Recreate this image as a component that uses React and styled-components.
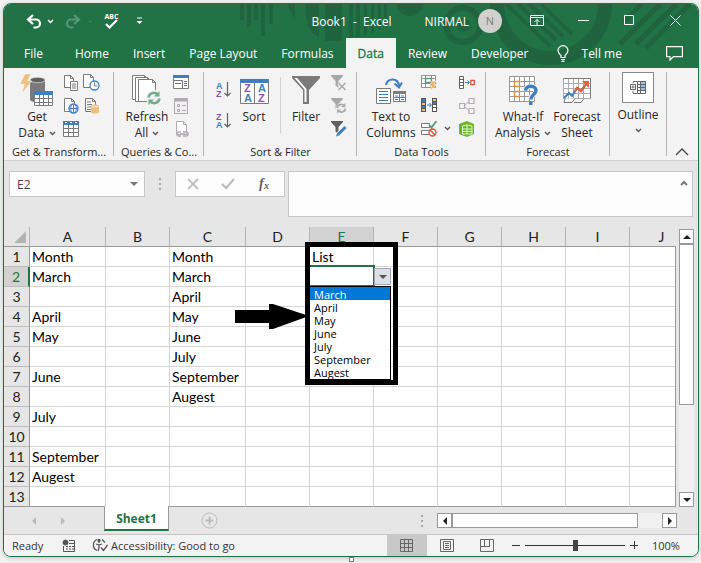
import React from "react";
import styled, { createGlobalStyle, css } from "styled-components";

const GREEN = "#217346";
const GREY = "#7a7a7a";
const BLUE = "#3f7fbf";
const UI = '"Open Sans", "Noto Sans", sans-serif';
const CELL = 'Lato, "Open Sans", sans-serif';

const GlobalStyle = createGlobalStyle`
  * { box-sizing: border-box; }
  body { margin: 0; background: #f1f1f1; font-family: ${UI}; font-size: 12px; color: #262626; }
  button, input, textarea, select { font: inherit; color: inherit; margin: 0; }
  svg { display: block; }
`;

const Page = styled.div`
  padding: 3px 2px 0 3px;
`;
const Window = styled.main`
  border: 1px solid ${GREEN};
  border-radius: 8px;
  overflow: hidden;
  background: #e6e6e6;
  box-shadow: 0 1px 4px rgba(0, 0, 0, 0.2);
`;
const PlainButton = styled.button`
  display: flex;
  align-items: center;
  justify-content: center;
  padding: 0;
  border: 0;
  background: none;
`;

/* Header */
const Header = styled.header`
  position: relative;
  background: ${GREEN};
  color: #fff;
`;
const Pattern = styled.svg`
  position: absolute;
  top: 0;
  right: 0;
`;
const TitleBar = styled.div`
  position: relative;
  display: flex;
  align-items: center;
  height: 34px;
`;
const QuickAccess = styled.div`
  display: flex;
  align-items: center;
  flex: 1;
  padding-left: 20px;
`;
const QuickButton = styled(PlainButton)`
  width: ${(p) => p.$w}px;
  height: 28px;
  opacity: ${(p) => (p.disabled ? 0.25 : 1)};
  color: #fff;
`;
const Title = styled.div`
  white-space: pre;
  padding-right: 33px;
`;
const Account = styled.button`
  display: flex;
  align-items: center;
  gap: 9px;
  padding: 0 12px 0 0;
  border: 0;
  background: none;
  color: #fff;
`;
const Avatar = styled.span`
  width: 24px;
  height: 24px;
  border-radius: 50%;
  background: #d2d0ce;
  color: #7a7a80;
  font-size: 11px;
  line-height: 24px;
  text-align: center;
`;
const WindowButton = styled(PlainButton)`
  width: 46px;
  height: 32px;
  align-self: flex-start;
  color: #fff;
`;
const Tabs = styled.nav`
  position: relative;
  display: flex;
  height: 30px;
  padding-left: 8px;
`;
const Tab = styled.button`
  height: 30px;
  padding: 0 ${(p) => (p.$wide ? 20 : 12)}px 0 12px;
  border: 0;
  background: ${(p) => (p.$active ? "#f3f3f3" : "transparent")};
  color: ${(p) => (p.$active ? GREEN : "#fff")};
  -webkit-text-stroke: ${(p) => (p.$active ? "0.3px" : "0")};
  white-space: nowrap;
`;
const TellMe = styled(PlainButton)`
  gap: 13px;
  margin-left: 16px;
  color: #fff;
  white-space: nowrap;
`;
const CommentButton = styled(PlainButton)`
  margin: 0 15px 0 auto;
  color: #fff;
`;

/* Ribbon */
const Ribbon = styled.section`
  display: flex;
  height: 93px;
  background: #f3f3f3;
  border-bottom: 1px solid #d2d2d2;
`;
const Group = styled.div`
  position: relative;
  display: flex;
  flex-direction: column;
  flex: 0 0 ${(p) => p.$w}px;
  &::after {
    content: "";
    position: absolute;
    top: 4px;
    bottom: 4px;
    right: 0;
    width: 1px;
    background: #b4b4b4;
  }
`;
const GroupBody = styled.div`
  display: flex;
  height: 76px;
  padding-left: ${(p) => p.$pad}px;
`;
const GroupLabel = styled.div`
  font-size: 11px;
  line-height: 16px;
  text-align: center;
  white-space: nowrap;
`;
const Big = styled.button`
  display: flex;
  flex-direction: column;
  align-items: center;
  width: ${(p) => p.$w}px;
  padding: 5px 0 0;
  border: 0;
  background: none;
  line-height: 16px;
  white-space: nowrap;
`;
const BigIcon = styled.span`
  display: flex;
  align-items: center;
  justify-content: center;
  height: 36px;
`;
const Line = styled.span`
  display: flex;
  align-items: center;
  gap: 4px;
`;
const Smalls = styled.div`
  display: grid;
  grid-template-columns: ${(p) => p.$cols};
  grid-template-rows: repeat(${(p) => p.$rows || 3}, ${(p) => p.$h || 23}px);
  align-content: start;
  padding-top: ${(p) => (p.$rows === 2 ? 6 : 3)}px;
`;
const InnerRule = styled.div`
  width: 1px;
  height: 56px;
  margin: 9px 3px 0 6px;
  background: #d0d0d0;
`;
const OutlineBox = styled.span`
  display: flex;
  align-items: center;
  justify-content: center;
  width: 32px;
  height: 31px;
  margin-bottom: 4px;
  border: 1px solid #8a8a8a;
  background: #fff;
`;
const OutlineButton = styled(Big)`
  padding-top: 4px;
`;
const Collapse = styled(PlainButton)`
  align-self: flex-end;
  width: 30px;
  height: 16px;
`;

/* Formula bar */
const FormulaRow = styled.section`
  display: flex;
  align-items: flex-start;
  height: 66px;
  padding: 10px 5px 0;
`;
const Field = styled.div`
  display: flex;
  align-items: center;
  justify-content: space-around;
  width: ${(p) => p.$w}px;
  height: 26px;
  border: 1px solid #c6c6c6;
  background: #fdfdfd;
`;
const NameInput = styled.input`
  flex: 1;
  min-width: 0;
  padding: 0 0 0 7px;
  border: 0;
  background: none;
  color: #444;
  outline: 0;
`;
const NameDrop = styled(PlainButton)`
  width: 20px;
  height: 24px;
`;
const Dots = styled.div`
  display: grid;
  gap: 3px;
  align-content: center;
  height: 26px;
  margin: 0 14px;
  & > i { width: 2px; height: 2px; background: #a8a8a8; }
`;
const FormulaBox = styled.div`
  display: flex;
  flex: 1;
  align-items: flex-start;
  height: 46px;
  margin-left: 3px;
  border: 1px solid #c6c6c6;
  background: #fdfdfd;
`;
const FormulaInput = styled.textarea`
  flex: 1;
  height: 44px;
  padding: 4px;
  border: 0;
  outline: 0;
  resize: none;
  background: none;
`;
const FormulaToggle = styled(PlainButton)`
  width: 16px;
  height: 22px;
`;

/* Sheet */
const SheetArea = styled.section`
  display: flex;
`;
const Grid = styled.div`
  position: relative;
  flex: 1;
  min-width: 0;
  overflow: hidden;
  &::after {
    content: "";
    position: absolute;
    top: 19px;
    right: 0;
    bottom: 0;
    width: 1px;
    background: #999;
  }
`;
const Table = styled.table`
  width: 100%;
  min-width: 690px;
  table-layout: fixed;
  border-collapse: separate;
  border-spacing: 0;
  font-family: ${CELL};
  font-size: 14px;
  color: #000;
`;
const Col = styled.col`
  width: ${(p) => (p.$w ? `${p.$w}px` : "auto")};
`;
const headCell = css`
  height: 20px;
  padding: 0;
  font-weight: 400;
  line-height: 19px;
  text-align: center;
  color: ${(p) => (p.$on ? GREEN : "#222")};
`;
const ColHead = styled.th`
  ${headCell}
  background: ${(p) => (p.$on ? "#d2d2d2" : "#e6e6e6")};
  border-bottom: 1px solid ${(p) => (p.$on ? GREEN : "#999")};
  border-right: 1px solid #b4b4b4;
`;
const RowHead = styled.th`
  ${headCell}
  background: ${(p) => (p.$on ? "#d2d2d2" : "#e6e6e6")};
  border-bottom: 1px solid ${(p) => (p.$last ? "#999" : "#bdbdbd")};
  border-right: ${(p) => (p.$on ? `2px solid ${GREEN}` : "1px solid #999")};
`;
const Corner = styled.td`
  padding: 0 3px 3px 0;
  vertical-align: bottom;
  border-right: 1px solid #b4b4b4;
  border-bottom: 1px solid #999;
  & > svg { margin-left: auto; }
`;
const Cell = styled.td`
  height: 20px;
  padding: 0 0 0 2px;
  line-height: 19px;
  background: #fff;
  border-right: 1px solid #d4d4d4;
  border-bottom: 1px solid ${(p) => (p.$last ? "#999" : "#d4d4d4")};
  white-space: nowrap;
`;
const Selection = styled.div`
  position: absolute;
  top: 38px;
  left: 304px;
  width: 67px;
  height: 22px;
  border: 2px solid ${GREEN};
`;
const DropButton = styled(PlainButton)`
  position: absolute;
  top: 41px;
  left: 370px;
  width: 17px;
  height: 17px;
  border: 1px solid #a4a8b2;
  background: #dcdfe6;
`;
const DropList = styled.select`
  position: absolute;
  top: 59px;
  left: 305px;
  width: 82px;
  height: 94px;
  padding: 0;
  border: 1px solid #000;
  border-radius: 0;
  outline: 0;
  overflow: hidden;
  background: #fff;
  font-size: 11px;
  scrollbar-width: none;
  & option {
    height: 13px;
    min-height: 13px;
    padding: 0 0 0 4px;
    line-height: 12px;
    color: #000;
  }
  & option:checked {
    background: linear-gradient(#0078d7, #0078d7);
    -webkit-text-fill-color: #fff;
  }
`;
const Frame = styled.div`
  position: absolute;
  top: 15px;
  left: 301px;
  width: 93px;
  height: 143px;
  border: 5px solid #000;
`;
const Arrow = styled.svg`
  position: absolute;
  top: 77px;
  left: 231px;
`;
const VScroll = styled.div`
  display: flex;
  flex-direction: column;
  width: 15px;
  margin: 2px 4px 0 3px;
  background: #f1f1f1;
`;
const ScrollButton = styled(PlainButton)`
  flex: none;
  width: 15px;
  height: 15px;
  border: 1px solid #999;
  background: #fff;
`;
const VThumb = styled.div`
  height: 161px;
  margin-bottom: auto;
  border: 1px solid #999;
  background: #fff;
`;
const HScroll = styled.div`
  display: flex;
  flex: 0 0 240px;
  height: 15px;
  margin-right: 21px;
  background: #f1f1f1;
`;
const HThumb = styled.div`
  width: 186px;
  margin-right: auto;
  border: 1px solid #999;
  background: #fff;
`;
const SheetBar = styled.section`
  display: flex;
  align-items: center;
  height: 28px;
  border-bottom: 1px solid #c6c6c6;
`;
const SheetNav = styled.div`
  display: flex;
  gap: 14px;
  width: 100px;
  padding-left: 22px;
`;
const SheetArrow = styled(PlainButton)`
  width: 15px;
  height: 15px;
`;
const SheetTab = styled.button`
  align-self: flex-start;
  position: relative;
  width: 65px;
  height: 25px;
  margin-top: -1px;
  padding: 2px 0 0;
  border: 1px solid #999;
  border-top: 0;
  border-bottom: 2px solid ${GREEN};
  background: #fff;
  color: ${GREEN};
  font-weight: 700;
`;
const AddSheet = styled(PlainButton)`
  margin: 0 auto 0 32px;
`;

/* Status bar */
const StatusBar = styled.footer`
  display: flex;
  align-items: center;
  height: 21px;
  background: #f3f3f3;
  color: #333;
  font-size: 11px;
  white-space: nowrap;
`;
const Ready = styled.span`
  width: 58px;
  padding-left: 8px;
`;
const Access = styled(PlainButton)`
  gap: 3px;
  margin: 0 auto 0 17px;
`;
const ViewButton = styled(PlainButton)`
  width: 40px;
  height: 21px;
  background: ${(p) => (p.$on ? "#c8c8c8" : "none")};
`;
const ZoomButton = styled(PlainButton)`
  width: 18px;
  height: 20px;
`;
const Slider = styled.input`
  appearance: none;
  width: 100px;
  height: 16px;
  background: linear-gradient(#333, #333) center / 100% 1px no-repeat;
  &::-webkit-slider-thumb {
    appearance: none;
    width: 5px;
    height: 11px;
    border-radius: 0;
    background: #444;
  }
`;
const ZoomLevel = styled.span`
  width: 55px;
  padding-left: 9px;
`;
const BelowWindow = styled.div`
  display: flex;
  justify-content: center;
  height: 6px;
`;
const Handle = styled.i`
  width: 5px;
  height: 5px;
  border: 1px solid #777;
  background: #fff;
`;

const Svg = ({ w, h, children, ...rest }) => (
  <svg width={w} height={h} viewBox={`0 0 ${w} ${h}`} fill="none" aria-hidden="true" {...rest}>
    {children}
  </svg>
);
const Chevron = ({ c = "#555" }) => (
  <Svg w={7} h={5} stroke={c} strokeWidth="1.4"><path d="M1 1l2.500 2.500L6 1" /></Svg>
);
const Triangle = ({ dir, c = "#222" }) => {
  const d = { up: "M0 6h8L4 2z", down: "M0 2h8L4 6z", left: "M6 0v8L2 4z", right: "M2 0v8l4-4z" }[dir];
  return <Svg w={8} h={8}><path d={d} fill={c} /></Svg>;
};
const Sheet = ({ x = 0, y = 0, w = 10, h = 13, c = GREY }) => (
  <path d={`M${x + 0.5} ${y + 0.5}h${w - 4}l3 3v${h - 4}h${1 - w}zM${x + w - 3.5} ${y + 0.5}v3h3`} fill="#fff" stroke={c} />
);
const Refresh = ({ x, y, s = 1, c }) => (
  <g transform={`translate(${x} ${y}) scale(${s})`} stroke={c} strokeWidth="2.4">
    <path d="M1.500 6.500A5.300 5.300 0 0 1 11 4M12.500 7.500A5.300 5.300 0 0 1 3 10" />
    <path d="M12.500 0v5.500H7zM1.500 14V8.500H7z" fill={c} stroke="none" />
  </g>
);
const Funnel = ({ c }) => <path d="M0 0h12v1L7.500 6v7L4.500 10.500V6L0 1z" fill={c} />;

const icons = {
  undo: (
    <Svg w={17} h={15} stroke="#fff" strokeWidth="2.2">
      <path d="M7 1L2 5.500L7 10M2.500 5.500H10a4 4 0 0 1 0 8H7.500" />
    </Svg>
  ),
  redo: (
    <Svg w={17} h={15} stroke="#fff" strokeWidth="2.2">
      <path d="M10 1l5 4.500L10 10M14.500 5.500H7a4 4 0 0 0 0 8h2.500" />
    </Svg>
  ),
  spell: (
    <Svg w={15} h={20}>
      <text x="7.500" y="8" textAnchor="middle" fontSize="7" fontWeight="700" fontFamily="Open Sans" fill="#fff">ABC</text>
      <path d="M2 13l3.500 3.500L13 9" stroke="#fff" strokeWidth="2.2" />
    </Svg>
  ),
  more: <Svg w={7} h={8}><path d="M1 1h5" stroke="#fff" /><path d="M.5 4h6l-3 3z" fill="#fff" /></Svg>,
  ribbon: (
    <Svg w={14} h={11} stroke="#fff"><path d="M.5.500h13v10H.500zM.500 2.500h13M7 10V4.500M4.500 7L7 4.500L9.500 7" /></Svg>
  ),
  bulb: (
    <Svg w={12} h={17} stroke="#fff" strokeWidth="1.2">
      <path d="M4 12.500V10.500C2.500 9 1 8 1 5.600a5 5 0 0 1 10 0C11 8 9.500 9 8 10.500v2zM4 14.500h4M4.500 16.400h3" />
    </Svg>
  ),
  comment: (
    <Svg w={17} h={15} stroke="#fff" strokeWidth="1.2"><path d="M.6.600h15.800v10H7.500L4 14V10.600H.600z" /></Svg>
  ),
  getData: (
    <Svg w={34} h={34}>
      <path d="M10 6v20c2 3 13 3 15 0V6z" fill={GREY} />
      <ellipse cx="17.5" cy="6" rx="7.5" ry="2.7" fill="#606060" stroke="#f3f3f3" strokeWidth=".6" />
      <path d="M5 0h6L7.500 7H12L2 19l2.500-9H0z" fill="#edc181" stroke="#f3f3f3" strokeWidth=".5" />
      <path d="M14.500 17.500h18v14h-18z" fill="#fff" stroke={GREY} />
      <path d="M14 17h19v4H14z" fill={BLUE} />
      <path d="M14 24.500h19M14 28.500h19M19.500 21v11M23.500 21v11M28.500 21v11" stroke={GREY} />
    </Svg>
  ),
  csv: (
    <Svg w={16} h={16}>
      <Sheet x={1} y={0} w={10} h={13} />
      <path d="M7.500 6.500h7v9h-7z" fill="#fff" stroke={GREY} />
      <path d="M9 9h4M9 11h4M9 13h4" stroke={GREY} />
    </Svg>
  ),
  recent: (
    <Svg w={17} h={17}>
      <Sheet x={0} y={0} w={11} h={14} />
      <circle cx="11.5" cy="11.5" r="4.5" fill="#fff" stroke={BLUE} strokeWidth="1.3" />
      <path d="M11.500 8.500v3.500h3" stroke={GREY} />
    </Svg>
  ),
  web: (
    <Svg w={16} h={16}>
      <Sheet x={1} y={0} w={11} h={14} />
      <circle cx="10.5" cy="10.5" r="4.5" fill="#fff" stroke={BLUE} strokeWidth="1.3" />
      <path d="M6 10.500h9M10.500 6v9M8.500 6.500c-1 3-1 5 0 8M12.500 6.500c1 3 1 5 0 8" stroke={BLUE} />
    </Svg>
  ),
  source: (
    <Svg w={16} h={16}>
      <Sheet x={1} y={0} w={11} h={14} />
      <path d="M3 4h4M3 6.500h5M3 9h4M3 11.500h4" stroke={GREY} />
      <path d="M7 7.500v7c1 1.500 7 1.500 8 0v-7c-1-1.500-7-1.500-8 0z" fill="#edc181" />
      <path d="M7.500 8c1 1 6 1 7 0" stroke="#fff" strokeWidth=".7" />
    </Svg>
  ),
  table: (
    <Svg w={16} h={16}>
      <path d="M.5.500h15v15H.500z" fill="#fff" stroke={GREY} />
      <path d="M0 0h16v4H0z" fill={BLUE} />
      <path d="M0 7.500h16M0 11.500h16M5.500 4v12M10.500 4v12" stroke={GREY} />
      <path d="M2 1.500h2M7 1.500h2M12 1.500h2" stroke="#fff" />
    </Svg>
  ),
  refreshAll: (
    <Svg w={30} h={34}>
      <Sheet x={0} y={1} w={16} h={25} /><Sheet x={3} y={3} w={16} h={25} /><Sheet x={6} y={5} w={18} h={23} />
      <circle cx="22" cy="24" r="8" fill="#f3f3f3" />
      <Refresh x={15} y={17} c="#72aa8c" />
    </Svg>
  ),
  queries: (
    <Svg w={16} h={15}>
      <path d="M.5.500h15v13H.500z" fill="#fff" stroke={GREY} /><path d="M0 0h16v3H0z" fill={BLUE} />
      <path d="M0 5.500h10M9.500 5v9" stroke={GREY} /><path d="M2 8.500h6M11 6.500h3M11 8.500h3M11 10.500h3" stroke={BLUE} />
    </Svg>
  ),
  props: (
    <Svg w={15} h={16} stroke="#b0abb0">
      <path d="M.5.500h13v15H.500z" fill="#f3f0f3" /><path d="M0 2h14" strokeWidth="3" />
      <path d="M3.500 6.500h2v2h-2zM3.500 11.500h2v2h-2zM8 7.500h4M8 12.500h4" />
    </Svg>
  ),
  links: (
    <Svg w={15} h={16} stroke="#b0abb0">
      <Sheet x={2} y={0} w={11} h={14} c="#b0abb0" />
      <path d="M7 11H5a2 2 0 0 0 0 4h2M9 11h3a2 2 0 0 1 0 4H9M6 13h5" fill="none" strokeWidth="1.5" />
    </Svg>
  ),
  filter: (
    <Svg w={28} h={30}>
      <path d="M0 0h28v2L17 14v14h-6V14L0 2z" fill={GREY} />
      <path d="M2.500 2L12.500 13.500V26h2V13L5 2" fill="#fff" />
    </Svg>
  ),
  clear: (
    <Svg w={16} h={16}><Funnel c="#a8a8a8" /><path d="M7.500 8l7 7M14.500 8l-7 7" stroke="#f3f3f3" strokeWidth="3.5" /><path d="M7.500 8l7 7M14.500 8l-7 7" stroke="#aaa" strokeWidth="1.5" /></Svg>
  ),
  reapply: (
    <Svg w={16} h={16}><Funnel c="#a8a8a8" /><circle cx="10.5" cy="10.5" r="5.5" fill="#f3f3f3" /><Refresh x={5} y={5} s={0.75} c="#aaa" /></Svg>
  ),
  advanced: (
    <Svg w={16} h={16}><Funnel c="#606060" /><path d="M5.500 15.500L15 5.500" stroke="#f3f3f3" strokeWidth="5" /><path d="M7 13.500L14.500 6" stroke={BLUE} strokeWidth="3" /><path d="M5 15.500l1-3 2 2z" fill={BLUE} /></Svg>
  ),
  textCols: (
    <Svg w={30} h={26}>
      <path d="M10 7c1-7 12-8 13 1" stroke={BLUE} strokeWidth="2.2" /><path d="M18.500 5.500L23 9.500L26 4.500" stroke={BLUE} strokeWidth="2" />
      <path d="M.5 10.500h14v15H.500z" fill="#fff" stroke={GREY} /><path d="M3 13.500h9M3 16.500h9M3 19.500h9M3 22.500h9" stroke={BLUE} />
      <path d="M17.500 13.500h12v10h-12z" fill="#fff" stroke={GREY} /><path d="M17 14.500h13" stroke={GREY} strokeWidth="3" />
      <path d="M17 19.500h13M23.500 16v8" stroke={GREY} /><path d="M19 18h3M25 18h3M19 21.500h3M25 21.500h3" stroke={BLUE} />
    </Svg>
  ),
  flash: (
    <Svg w={16} h={16}>
      <path d="M.5.500h14v12H.500zM0 3.500h15M0 8.500h15M4.500 0v12M10.500 0v12" fill="#fff" stroke="#909090" />
      <path d="M4.500 3.500h6v4h-6z" fill="#fff" stroke="#549d78" strokeWidth="1.4" />
      <path d="M11 6h4l-2 3.500h3L9 16l1.500-4.500H8z" fill="#edb86d" stroke="#fff" strokeWidth=".5" />
    </Svg>
  ),
  dupes: (
    <Svg w={16} h={15}>
      <path d="M0 0h5v14H0zM11 0h5v14h-5z" fill="#555" /><path d="M1 1h3v3H1zM1 8h3v2H1zM12 4h3v2h-3z" fill={BLUE} />
      <path d="M1 5h3v2H1zM1 11h3v2H1zM12 1h3v2h-3z" fill="#edc181" /><path d="M12 7h3v2h-3zM12 10h3v3h-3z" fill="#fff" />
      <path d="M6 7h4M8.500 5l2 2-2 2" stroke={BLUE} />
    </Svg>
  ),
  validate: (
    <Svg w={16} h={16}>
      <path d="M.5 2.500h8v4h-8zM.500 9.500h8v4h-8z" fill="#fff" stroke={GREY} /><path d="M8 3.500l2.500 3L15.500 0" stroke="#549d78" strokeWidth="1.8" />
      <circle cx="11.5" cy="11.5" r="3.5" fill="#fff" stroke="#d8573b" strokeWidth="1.4" /><path d="M9 9l5 5" stroke="#d8573b" strokeWidth="1.4" />
    </Svg>
  ),
  consolidate: (
    <Svg w={16} h={13}>
      <path d="M.5.500h4v12h-4zM0 3.500h5M0 6.500h5M0 9.500h5" fill="#fff" stroke="#606060" /><path d="M6 6.500h4M8.500 4.500l2 2-2 2" stroke={BLUE} />
      <path d="M11.800 4.500h3.500v4h-3.500z" fill="#fff" stroke="#d8573b" strokeWidth="1.3" />
    </Svg>
  ),
  relations: (
    <Svg w={16} h={16} stroke="#b0abb0">
      <path d="M5 8l5-4.500M5 8l5 4.500" /><path d="M.5 5.500h5v5h-5zM10 .500h5v5h-5zM10 10.500h5v5h-5z" fill="#f7f3f7" strokeWidth="1.2" />
    </Svg>
  ),
  model: (
    <Svg w={16} h={16}>
      <path d="M0 3l8-3 7 3v10l-7 3-8-3z" fill="#6cb52d" /><path d="M3.500 5l4.500-1 5 1v8H3.500zM3.500 8H13M3.500 10.500H13M8 4v9" stroke="#fff" strokeWidth=".8" />
    </Svg>
  ),
  whatIf: (
    <Svg w={29} h={30}>
      <path d="M.5.500h25v25H.500zM0 5.500h26M0 10.500h26M0 15.500h26M0 20.500h26M5.500 0v26M10.500 0v26M15.500 0v26M20.500 0v26" fill="#fff" stroke="#999" />
      <path d="M5.500 5.500h5v5h-5zM5.500 15.500h5v5h-5z" fill="#fff" stroke="#e58a3c" strokeWidth="1.3" />
      <path d="M16.500 14.500C17 8.500 27 9 27 14.500C27 18.500 21.800 18.500 21.800 23.500" stroke="#f3f3f3" strokeWidth="5" />
      <path d="M16.500 14.500C17 8.500 27 9 27 14.500C27 18.500 21.800 18.500 21.800 23.500" stroke={BLUE} strokeWidth="3.4" />
      <path d="M20 25.500h3.500V29H20z" fill={BLUE} />
    </Svg>
  ),
  forecast: (
    <Svg w={28} h={26}>
      <path d="M.5.500h27v20H.500zM0 5.500h28M0 10.500h28M0 15.500h28M5.500 0v20M10.500 0v20M15.500 0v20M20.500 0v20" fill="#fff" stroke="#aaa" />
      <path d="M.500.500h27v20" stroke={GREY} />
      <path d="M2 20.500l-1 4h8l3-4M11 24.500h7l3-4" fill="#fff" stroke={GREY} />
      <path d="M1 20l5-5 3 3 4-6" stroke={BLUE} strokeWidth="2" /><path d="M12 13l2-3 4 3 6-8" stroke="#d8653f" strokeWidth="2.4" />
      <path d="M19 3h7v7z" fill="#d8653f" />
    </Svg>
  ),
  outline: (
    <Svg w={16} h={13}>
      <path d="M.5 3.500h5v5h-5zM1.500 6h3M3 4.500v3M3 1v1M3 10v2M3 .500h4M3 12.500h4" stroke="#666" />
      <path d="M7.500.500h8v12h-8zM7.500 3.500h8M7.500 6.500h8M7.500 9.500h8M10.500 0v13" stroke="#666" /><path d="M11 2h4M11 5h4M11 8h4" stroke={BLUE} />
    </Svg>
  ),
};

const SortAZ = ({ flip }) => (
  <Svg w={16} h={24}>
    <g fontFamily="Liberation Sans" fontSize="9" fontWeight="700">
      <text x="1" y="11" fill={flip ? "#8a55a8" : BLUE}>{flip ? "Z" : "A"}</text>
      <text x="1" y="19" fill={flip ? BLUE : "#8a55a8"}>{flip ? "A" : "Z"}</text>
    </g>
    <path d="M12.500 4v14M9.500 15l3 3 3-3" stroke="#606060" strokeWidth="1.2" />
  </Svg>
);
const SortIcon = () => (
  <Svg w={29} h={25}>
    <path d="M.5.500h28v24H.500zM14.500 0v25" fill="#fff" stroke={GREY} /><path d="M0 0h29v4H0z" fill={BLUE} />
    <g fontFamily="Liberation Sans" fontSize="11" fontWeight="700">
      <text x="4" y="13" fill="#8a55a8">Z</text><text x="4" y="23" fill={BLUE}>A</text>
      <text x="18" y="13" fill={BLUE}>A</text><text x="18" y="23" fill="#8a55a8">Z</text>
    </g>
  </Svg>
);

const Small = ({ name, label }) => <PlainButton aria-label={label}>{icons[name]}</PlainButton>;
const BigButton = ({ w, icon, lines, menu }) => (
  <Big $w={w}>
    <BigIcon>{icon}</BigIcon>
    {lines.map((line, i) => (
      <Line key={line}>{line}{menu && i === lines.length - 1 && <Chevron />}</Line>
    ))}
  </Big>
);

const HeaderPattern = () => (
  <Pattern width="460" height="64" viewBox="0 0 460 64" aria-hidden="true">
    <g fill="#1f643e">
      <path d="M2 0h4v16H2zM9 0h4v23H9zM16 0h4v16h-4zM23 0h4v32h-4zM31 0h4v20h-4zM49 0h8v15zM67 0h14v33c-8-2-13-12-14-33zM87 0h17v37H87z" />
      <path d="M111 0h4v34h-4zM118 0h4v33h-4zM126 0h3v31h-3zM133 0h3v29h-3zM140 0h3v25h-3zM146 0h3v19h-3z" />
      <circle cx="172" cy="-2" r="14" /><circle cx="225" cy="21" r="7" />
    </g>
    <g fill="none" stroke="#1f643e">
      <circle cx="225" cy="21" r="17" strokeWidth="6" />
      <circle cx="313" cy="0" r="54" strokeWidth="14" />
      <path d="M268 0l44 42M280 0l38 36M291 0l34 32M303 0l31 30" strokeWidth="4" />
      <path d="M404 0l-18 18M422 0l-40 40M438 0l-40 40M452 0l-44 44" strokeWidth="5" />
    </g>
  </Pattern>
);

const columns = [["A", 76], ["B", 64], ["C", 76], ["D", 64], ["E", 64], ["F", 64], ["G", 64], ["H", 64], ["I", 64], ["J", 0]];
const data = {
  A: ["Month", "March", "", "April", "May", "", "June", "", "July", "", "September", "Augest", ""],
  C: ["Month", "March", "April", "May", "June", "July", "September", "Augest"],
  E: ["List"],
};
const options = ["March", "April", "May", "June", "July", "September", "Augest"];

export default function App() {
  return (
    <Page>
      <GlobalStyle />
      <Window>
        <Header>
          <HeaderPattern />
          <TitleBar>
            <QuickAccess>
              <QuickButton $w={20} aria-label="Undo">{icons.undo}</QuickButton>
              <QuickButton $w={12} aria-label="Undo history"><Chevron c="#fff" /></QuickButton>
              <QuickButton $w={32} disabled aria-label="Redo">{icons.redo}</QuickButton>
              <QuickButton $w={4} disabled aria-label="Redo history"><Chevron c="#fff" /></QuickButton>
              <QuickButton $w={38} aria-label="Spelling">{icons.spell}</QuickButton>
              <QuickButton $w={18} aria-label="Customize toolbar">{icons.more}</QuickButton>
            </QuickAccess>
            <Title>{"Book1  -  Excel"}</Title>
            <Account>NIRMAL<Avatar>N</Avatar></Account>
            <WindowButton aria-label="Ribbon display options">{icons.ribbon}</WindowButton>
            <WindowButton aria-label="Minimize"><Svg w={11} h={11} stroke="#fff"><path d="M0 5.500h11" /></Svg></WindowButton>
            <WindowButton aria-label="Maximize"><Svg w={11} h={11} stroke="#fff"><path d="M.5.500h9v9h-9z" /></Svg></WindowButton>
            <WindowButton aria-label="Close"><Svg w={11} h={11} stroke="#fff"><path d="M.5.500l10 10M10.500.500l-10 10" /></Svg></WindowButton>
          </TitleBar>
          <Tabs>
            {["File", "Home", "Insert", "Page Layout", "Formulas", "Data", "Review", "Developer"].map((t) => (
              <Tab key={t} $wide={t === "File"} $active={t === "Data"}>{t}</Tab>
            ))}
            <TellMe>{icons.bulb}Tell me</TellMe>
            <CommentButton aria-label="Comments">{icons.comment}</CommentButton>
          </Tabs>
        </Header>

        <Ribbon>
          <Group $w={110}>
            <GroupBody $pad={10}>
              <BigButton w={46} icon={icons.getData} lines={["Get", "Data"]} menu />
              <Smalls $cols="21px 21px">
                <Small name="csv" label="From text" /><Small name="recent" label="Recent sources" />
                <Small name="web" label="From web" /><Small name="source" label="Existing connections" />
                <Small name="table" label="From table" />
              </Smalls>
            </GroupBody>
            <GroupLabel>Get &amp; Transform...</GroupLabel>
          </Group>
          <Group $w={90}>
            <GroupBody $pad={10}>
              <BigButton w={46} icon={icons.refreshAll} lines={["Refresh", "All"]} menu />
              <Smalls $cols="22px">
                <Small name="queries" label="Queries" /><Small name="props" label="Properties" /><Small name="links" label="Edit links" />
              </Smalls>
            </GroupBody>
            <GroupLabel>Queries &amp; Co...</GroupLabel>
          </Group>
          <Group $w={153}>
            <GroupBody $pad={8}>
              <Smalls $cols="22px" $rows={2} $h={31}>
                <PlainButton aria-label="Sort A to Z"><SortAZ /></PlainButton>
                <PlainButton aria-label="Sort Z to A"><SortAZ flip /></PlainButton>
              </Smalls>
              <BigButton w={40} icon={<SortIcon />} lines={["Sort"]} />
              <InnerRule />
              <BigButton w={44} icon={icons.filter} lines={["Filter"]} />
              <Smalls $cols="22px">
                <Small name="clear" label="Clear" /><Small name="reapply" label="Reapply" /><Small name="advanced" label="Advanced" />
              </Smalls>
            </GroupBody>
            <GroupLabel>Sort &amp; Filter</GroupLabel>
          </Group>
          <Group $w={129}>
            <GroupBody $pad={8}>
              <BigButton w={52} icon={icons.textCols} lines={["Text to", "Columns"]} />
              <Smalls $cols="24px 12px 28px">
                <Small name="flash" label="Flash fill" /><span /><Small name="consolidate" label="Consolidate" />
                <Small name="dupes" label="Remove duplicates" /><span /><Small name="relations" label="Relationships" />
                <Small name="validate" label="Data validation" />
                <PlainButton aria-label="Data validation menu"><Chevron /></PlainButton>
                <Small name="model" label="Data model" />
              </Smalls>
            </GroupBody>
            <GroupLabel>Data Tools</GroupLabel>
          </Group>
          <Group $w={124}>
            <GroupBody $pad={10}>
              <BigButton w={54} icon={icons.whatIf} lines={["What-If", "Analysis"]} menu />
              <BigButton w={54} icon={icons.forecast} lines={["Forecast", "Sheet"]} />
            </GroupBody>
            <GroupLabel>Forecast</GroupLabel>
          </Group>
          <Group $w={57}>
            <OutlineButton $w={56}>
              <OutlineBox>{icons.outline}</OutlineBox>
              <Line>Outline</Line>
              <Line><Svg w={7} h={16} stroke="#555" strokeWidth="1.4"><path d="M1 6l2.500 2.500L6 6" /></Svg></Line>
            </OutlineButton>
          </Group>
          <Collapse aria-label="Collapse ribbon"><Svg w={14} h={8} stroke="#444" strokeWidth="1.3"><path d="M1 7l6-6 6 6" /></Svg></Collapse>
        </Ribbon>

        <FormulaRow>
          <Field $w={136}>
            <NameInput aria-label="Name box" defaultValue="E2" />
            <NameDrop aria-label="Open name list"><Triangle dir="down" c="#777" /></NameDrop>
          </Field>
          <Dots><i /><i /><i /></Dots>
          <Field $w={110}>
            <PlainButton aria-label="Cancel"><Svg w={12} h={12} stroke="#c0c0c0" strokeWidth="1.8"><path d="M1 1l10 10M11 1L1 11" /></Svg></PlainButton>
            <PlainButton aria-label="Enter"><Svg w={14} h={12} stroke="#c0c0c0" strokeWidth="2.4"><path d="M1 6l4 4 8-9" /></Svg></PlainButton>
            <PlainButton aria-label="Insert function">
              <Svg w={16} h={16}>
                <g fontFamily="Liberation Serif" fontStyle="italic" fontWeight="700" fill="#606060">
                  <text x="2" y="12" fontSize="14">f</text><text x="7" y="13" fontSize="10">x</text>
                </g>
              </Svg>
            </PlainButton>
          </Field>
          <FormulaBox>
            <FormulaInput aria-label="Formula" />
            <FormulaToggle aria-label="Collapse formula bar"><Svg w={8} h={6} stroke="#777" strokeWidth="2"><path d="M1 5l3-3 3 3" /></Svg></FormulaToggle>
          </FormulaBox>
        </FormulaRow>

        <SheetArea>
          <Grid>
            <Table>
              <colgroup><Col $w={26} />{columns.map(([c, w]) => <Col key={c} $w={w} />)}</colgroup>
              <thead>
                <tr>
                  <Corner><Svg w={12} h={12}><path d="M12 0v12H0z" fill="#b4b4b4" /></Svg></Corner>
                  {columns.map(([c]) => <ColHead key={c} scope="col" $on={c === "E"}>{c}</ColHead>)}
                </tr>
              </thead>
              <tbody>
                {data.A.map((_, r) => (
                  <tr key={r}>
                    <RowHead scope="row" $on={r === 1} $last={r === 12}>{r + 1}</RowHead>
                    {columns.map(([c]) => <Cell key={c} $last={r === 12}>{data[c]?.[r]}</Cell>)}
                  </tr>
                ))}
              </tbody>
            </Table>
            <Selection />
            <DropButton aria-label="Show list"><Triangle dir="down" c="#555" /></DropButton>
            <Frame />
            <DropList size={7} aria-label="List" defaultValue="March">
              {options.map((o) => <option key={o}>{o}</option>)}
            </DropList>
            <Arrow width="75" height="25" viewBox="0 0 75 25" aria-hidden="true"><path d="M0 6h34V0h4l36 12-36 13h-4v-6H0z" /></Arrow>
          </Grid>
          <VScroll>
            <ScrollButton aria-label="Scroll up"><Triangle dir="up" /></ScrollButton>
            <VThumb />
            <ScrollButton aria-label="Scroll down"><Triangle dir="down" /></ScrollButton>
          </VScroll>
        </SheetArea>

        <SheetBar>
          <SheetNav>
            <SheetArrow aria-label="Previous sheet"><Triangle dir="left" c="#bbb" /></SheetArrow>
            <SheetArrow aria-label="Next sheet"><Triangle dir="right" c="#bbb" /></SheetArrow>
          </SheetNav>
          <SheetTab>Sheet1</SheetTab>
          <AddSheet aria-label="New sheet">
            <Svg w={17} h={17} stroke="#bbb"><circle cx="8.5" cy="8.5" r="7.5" /><path d="M4.500 8.500h8M8.500 4.500v8" strokeWidth="2" /></Svg>
          </AddSheet>
          <Dots><i /><i /><i /></Dots>
          <HScroll>
            <ScrollButton aria-label="Scroll left"><Triangle dir="left" /></ScrollButton>
            <HThumb />
            <ScrollButton aria-label="Scroll right"><Triangle dir="right" /></ScrollButton>
          </HScroll>
        </SheetBar>

        <StatusBar>
          <Ready>Ready</Ready>
          <PlainButton aria-label="Record macro">
            <Svg w={13} h={13} stroke="#555"><path d="M7 1.500h5.500v11h-11V7M7 4.500h5M4 7.500h2M7 7.500h2M10 7.500h2M4 10h2M7 10h2M10 10h2" /><circle cx="3.5" cy="3.5" r="2.5" fill="#555" /></Svg>
          </PlainButton>
          <Access>
            <Svg w={16} h={15} stroke="#555" strokeWidth="1.3"><path d="M5 1.500a6 6 0 0 0 0 11M10 1.500l3 3M7 1v4M4 6l3 1v3l-1 3M7 7l3-1M9 9.500l2.500 3L15.500 7" /><circle cx="7" cy="2.5" r="1" fill="#555" /></Svg>
            Accessibility: Good to go
          </Access>
          <ViewButton $on aria-label="Normal view"><Svg w={14} h={13} stroke="#666"><path d="M.5.500h12v12H.500zM0 4.500h13M0 8.500h13M4.500 0v13M8.500 0v13" /></Svg></ViewButton>
          <ViewButton aria-label="Page layout view"><Svg w={14} h={13} stroke="#666"><path d="M.5.500h13v12H.500zM3.500 2.500h7v8h-7zM5 4.500h4M5 6.500h4M5 8.500h4" /></Svg></ViewButton>
          <ViewButton aria-label="Page break view"><Svg w={14} h={13} stroke="#666"><path d="M.5.500h13v12H.500zM4.500 0v7.500M9.500 0v7.500M0 7.500h10" /></Svg></ViewButton>
          <ZoomButton aria-label="Zoom out"><Svg w={9} h={9} stroke="#333"><path d="M0 4.500h8" /></Svg></ZoomButton>
          <Slider type="range" aria-label="Zoom" defaultValue="50" />
          <ZoomButton aria-label="Zoom in"><Svg w={9} h={9} stroke="#333"><path d="M0 4.500h8M4.500 0v8" /></Svg></ZoomButton>
          <ZoomLevel>100%</ZoomLevel>
        </StatusBar>
      </Window>
      <BelowWindow><Handle /></BelowWindow>
    </Page>
  );
}
